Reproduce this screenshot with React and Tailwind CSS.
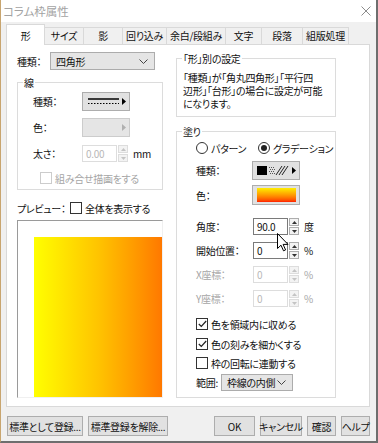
import React from 'react';

const tabs = [
  ['形', 'w-[39px]'],
  ['サイズ', 'w-[40px]'],
  ['影', 'w-[40px]'],
  ['回り込み', 'w-[45px]'],
  ['余白/段組み', 'w-[60px]'],
  ['文字', 'w-[37px]'],
  ['段落', 'w-[42px]'],
  ['組版処理', 'w-[47px]'],
];

function Chevron() {
  return (
    <svg width="9" height="5" viewBox="0 0 9 5">
      <path d="M0.5 0.5L4.5 4.5L8.5 0.5" fill="none" stroke="#444" strokeWidth="1" />
    </svg>
  );
}

function Tri({ color = '#000' }) {
  return (
    <svg width="4" height="7" viewBox="0 0 4 7">
      <path d="M0 0L4 3.5L0 7Z" fill={color} />
    </svg>
  );
}

function Select({ value, className }) {
  return (
    <div className={`flex items-center justify-between border border-[#acacac] bg-[#e5e5e5] pl-[5px] pr-[6px] ${className}`}>
      <span>{value}</span>
      <Chevron />
    </div>
  );
}

function Check({ checked, disabled, children }) {
  return (
    <div className={`flex items-center gap-[3px] h-[14px] ${disabled ? 'text-[#a6a6a6]' : ''}`}>
      <div className={`w-[12px] h-[12px] border bg-white flex items-center justify-center ${disabled ? 'border-[#cccccc]' : 'border-[#333333]'}`}>
        {checked && (
          <svg width="9" height="8" viewBox="0 0 9 8">
            <path d="M0.8 4L3.3 6.5L8.2 1" fill="none" stroke="#222" strokeWidth="1.2" />
          </svg>
        )}
      </div>
      <span>{children}</span>
    </div>
  );
}

function Radio({ checked, children }) {
  return (
    <div className="flex items-center gap-[3px] h-[14px]">
      <div className="w-[12px] h-[12px] rounded-full border border-[#333333] bg-white flex items-center justify-center">
        {checked && <div className="w-[6px] h-[6px] rounded-full bg-[#222222]" />}
      </div>
      <span>{children}</span>
    </div>
  );
}

function Spin({ disabled }) {
  const b = disabled ? 'border-[#dddddd]' : 'border-[#adadad]';
  const f = disabled ? '#c4c4c4' : '#333';
  return (
    <div className="flex flex-col w-[10px] h-[17px] ml-[1px] gap-[1px]">
      <div className={`h-[8px] border ${b} bg-[#f3f3f3] flex items-center justify-center`}>
        <svg width="5" height="3" viewBox="0 0 5 3"><path d="M0 3L2.5 0L5 3Z" fill={f} /></svg>
      </div>
      <div className={`h-[8px] border ${b} bg-[#f3f3f3] flex items-center justify-center`}>
        <svg width="5" height="3" viewBox="0 0 5 3"><path d="M0 0L2.5 3L5 0Z" fill={f} /></svg>
      </div>
    </div>
  );
}

function Num({ value, unit, disabled, grayUnit, className = 'w-[35px]' }) {
  return (
    <div className="flex items-center h-[17px]">
      <div className={`h-full ${className} border bg-white flex items-center pl-[3px] ${disabled ? 'border-[#dddddd] text-[#b8b8b8]' : 'border-[#7a7a7a]'}`}>
        {value}
      </div>
      <Spin disabled={disabled} />
      <span className={`ml-[5px] ${grayUnit ? 'text-[#a6a6a6]' : 'text-[#111]'}`}>{unit}</span>
    </div>
  );
}

function Group({ title, className, children }) {
  return (
    <div className={`relative border border-[#dcdcdc] ${className}`}>
      <span className="absolute left-[5px] top-[-7px] bg-white px-[1px] leading-[13px]">{title}</span>
      {children}
    </div>
  );
}

function Btn({ className, children }) {
  return (
    <div className={`h-[20px] flex items-center justify-center border border-[#adadad] bg-[#e1e1e1] ${className}`}>
      {children}
    </div>
  );
}

function Cursor() {
  return (
    <svg className="absolute left-[276px] top-[233px]" width="12" height="19" viewBox="0 0 12 19">
      <path d="M0.5 0.5L0.5 15.5L4 12.2L6.5 17.8L8.6 16.9L6.1 11.4L11 11.4Z" fill="#fff" stroke="#000" strokeWidth="1" strokeLinejoin="round" />
    </svg>
  );
}

export default function App() {
  return (
    <div className="relative w-[378px] h-[443px] flex flex-col bg-[#f0f0f0] border-l border-l-[#c8a56f] border-r-2 border-r-[#6e6e6e] border-b-2 border-b-[#6e6e6e] text-[10px] leading-[13px] tracking-[-0.3px] whitespace-nowrap text-[#111] font-['Noto_Sans_CJK_JP',sans-serif] [font-feature-settings:'palt'] overflow-hidden">
      {/* title bar */}
      <div className="h-[22px] shrink-0 bg-white flex items-center justify-between pl-[2px] pr-[5px]">
        <span className="text-[11.5px] tracking-normal text-[#a3a3a3]">コラム枠属性</span>
        <svg width="10" height="10" viewBox="0 0 10 10">
          <path d="M0.5 0.5L9.5 9.5M9.5 0.5L0.5 9.5" stroke="#8c8c8c" strokeWidth="1" />
        </svg>
      </div>

      <div className="flex-1 flex flex-col pl-[5px]">
        {/* tabs */}
        <div className="flex items-end h-[21px] mt-[2px] -mb-px">
          {tabs.map(([t, w], i) => (
            <div
              key={t}
              className={`${w} flex items-center justify-center border border-[#d9d9d9] ${i === 0 ? 'h-[21px] bg-white border-b-0 relative z-10' : 'h-[18px] bg-[#f0f0f0] -ml-px pb-[1px]'}`}
            >
              {t}
            </div>
          ))}
        </div>

        {/* panel */}
        <div className="w-[364px] h-[363px] shrink-0 bg-white border border-[#d9d9d9] flex pl-[10px]">
          {/* left column */}
          <div className="w-[146px] flex flex-col pt-[7px]">
            <div className="flex items-center h-[18px]">
              <span className="w-[33px]">種類：</span>
              <Select value="四角形" className="w-[105px] h-[18px]" />
            </div>

            <Group title="線" className="mt-[12px] h-[108px] flex flex-col pl-[15px] pt-[9px]">
              <div className="flex items-center h-[19px]">
                <span className="w-[49px]">種類：</span>
                <div className="w-[48px] h-[19px] border border-[#adadad] bg-[#e1e1e1] flex items-center justify-between pl-[5px] pr-[3px]">
                  <svg width="31" height="9" viewBox="0 0 31 9">
                    <line x1="0" y1="2" x2="31" y2="2" stroke="#000" strokeWidth="1.5" />
                    <line x1="0" y1="6.5" x2="31" y2="6.5" stroke="#000" strokeWidth="1" strokeDasharray="1.5 1.5" />
                  </svg>
                  <Tri />
                </div>
              </div>
              <div className="flex items-center h-[19px] mt-[7px]">
                <span className="w-[49px]">色：</span>
                <div className="w-[48px] h-[19px] border border-[#cccccc] bg-[#e5e5e5] flex items-center justify-end pr-[3px]">
                  <Tri color="#b0b0b0" />
                </div>
              </div>
              <div className="flex items-center h-[17px] mt-[8px]">
                <span className="w-[49px]">太さ：</span>
                <Num value="0.00" unit="mm" disabled />
              </div>
              <div className="mt-[9px] pl-[7px]">
                <Check disabled>組み合せ描画をする</Check>
              </div>
            </Group>

            <div className="flex items-center h-[14px] mt-[11px]">
              <span className="w-[53px]">プレビュー：</span>
              <Check>全体を表示する</Check>
            </div>

            <div className="mt-[5px] w-[146px] h-[178px] border-l border-t border-[#9a9a9a] border-r border-r-[#f0f0f0] border-b border-b-[#f0f0f0] pl-[16px] pt-[16px] flex">
              <div className="flex-1 bg-gradient-to-r from-[#ffff00] via-[#ffc400] to-[#ff7800]" />
            </div>
          </div>

          {/* right column */}
          <div className="w-[160px] ml-[13px] flex flex-col">
            <Group title="「形」別の設定" className="mt-[13px] h-[59px] pl-[6px] pt-[12px]">
              <p className="leading-[13px]">
                「種類」が「角丸四角形」「平行四<br />
                辺形」「台形」の場合に設定が可能<br />
                になります。
              </p>
            </Group>

            <Group title="塗り" className="mt-[14px] h-[267px] flex flex-col pl-[19px] pt-[9px]">
              <div className="flex items-center h-[14px]">
                <div className="w-[62px]"><Radio>パターン</Radio></div>
                <Radio checked>グラデーション</Radio>
              </div>
              <div className="flex items-center h-[19px] mt-[6px]">
                <span className="w-[56px]">種類：</span>
                <div className="w-[48px] h-[19px] border border-[#adadad] bg-[#e1e1e1] flex items-center justify-between pl-[4px] pr-[3px]">
                  <svg width="34" height="11" viewBox="0 0 34 11">
                    <rect x="0" y="1" width="10" height="9" fill="#000" />
                    <g fill="#555">
                      <rect x="12" y="2" width="1" height="1" /><rect x="14" y="2" width="1" height="1" /><rect x="16" y="2" width="1" height="1" />
                      <rect x="13" y="4" width="1" height="1" /><rect x="15" y="4" width="1" height="1" /><rect x="17" y="4" width="1" height="1" />
                      <rect x="12" y="6" width="1" height="1" /><rect x="14" y="6" width="1" height="1" /><rect x="16" y="6" width="1" height="1" />
                      <rect x="13" y="8" width="1" height="1" /><rect x="15" y="8" width="1" height="1" /><rect x="17" y="8" width="1" height="1" />
                    </g>
                    <path d="M19 10L25 1M22 10L28 1M25 10L31 1" stroke="#222" strokeWidth="1" />
                  </svg>
                  <Tri />
                </div>
              </div>
              <div className="flex items-center h-[20px] mt-[5px]">
                <span className="w-[56px]">色：</span>
                <div className="w-[48px] h-[20px] border border-[#adadad] bg-[#e1e1e1] flex items-center justify-center">
                  <div className="w-[39px] h-[14px] bg-gradient-to-b from-[#ffee00] via-[#ff9a00] to-[#ff1a00]" />
                </div>
              </div>
              <div className="flex items-center h-[17px] mt-[13px]">
                <span className="w-[57px]">角度：</span>
                <Num value="90.0" unit="度" />
              </div>
              <div className="flex items-center h-[17px] mt-[7px]">
                <span className="w-[57px]">開始位置：</span>
                <Num value="0" unit="%" />
              </div>
              <div className="flex items-center h-[17px] mt-[7px] text-[#a6a6a6]">
                <span className="w-[57px]">X座標：</span>
                <Num value="0" unit="%" disabled grayUnit />
              </div>
              <div className="flex items-center h-[17px] mt-[7px] text-[#a6a6a6]">
                <span className="w-[57px]">Y座標：</span>
                <Num value="0" unit="%" disabled grayUnit />
              </div>
              <div className="mt-[10px]"><Check checked>色を領域内に収める</Check></div>
              <div className="mt-[6px]"><Check checked>色の刻みを細かくする</Check></div>
              <div className="mt-[5px]"><Check>枠の回転に連動する</Check></div>
              <div className="flex items-center h-[17px] mt-[4px]">
                <span className="w-[25px]">範囲:</span>
                <Select value="枠線の内側" className="w-[72px] h-[17px]" />
              </div>
            </Group>
          </div>
        </div>

        {/* buttons */}
        <div className="w-[364px] flex items-center justify-between mt-[9px] pl-[1px]">
          <div className="flex gap-[5px]">
            <Btn className="w-[76px]">標準として登録...</Btn>
            <Btn className="w-[80px]">標準登録を解除...</Btn>
          </div>
          <div className="flex gap-[5px]">
            <Btn className="w-[41px]">OK</Btn>
            <Btn className="w-[42px]">キャンセル</Btn>
            <Btn className="w-[29px]">確認</Btn>
            <Btn className="w-[29px]">ヘルプ</Btn>
          </div>
        </div>
      </div>

      <Cursor />
    </div>
  );
}
